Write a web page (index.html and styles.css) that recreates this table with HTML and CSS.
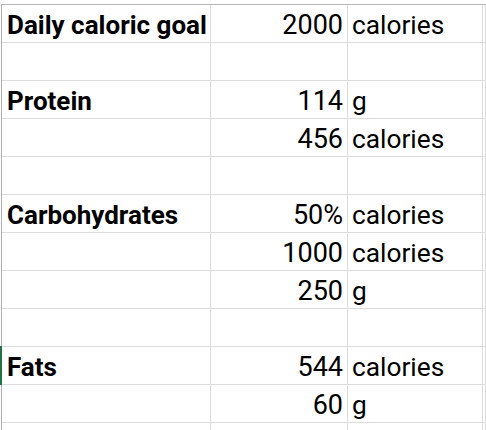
FILE: index.html
```html
<!DOCTYPE html>
<html>
<head>
<meta charset="utf-8">
<link rel="stylesheet" href="styles.css">
</head>
<body>
<div class="sheet">
  <div class="grid">
    <div class="cell label">Daily caloric goal</div><div class="cell num">2000</div><div class="cell unit">calories</div><div class="cell"></div>
    <div class="cell"></div><div class="cell"></div><div class="cell"></div><div class="cell"></div>
    <div class="cell label">Protein</div><div class="cell num">114</div><div class="cell unit">g</div><div class="cell"></div>
    <div class="cell"></div><div class="cell num">456</div><div class="cell unit">calories</div><div class="cell"></div>
    <div class="cell"></div><div class="cell"></div><div class="cell"></div><div class="cell"></div>
    <div class="cell label">Carbohydrates</div><div class="cell num">50%</div><div class="cell unit">calories</div><div class="cell"></div>
    <div class="cell"></div><div class="cell num">1000</div><div class="cell unit">calories</div><div class="cell"></div>
    <div class="cell"></div><div class="cell num">250</div><div class="cell unit">g</div><div class="cell"></div>
    <div class="cell"></div><div class="cell"></div><div class="cell"></div><div class="cell"></div>
    <div class="cell label selected">Fats</div><div class="cell num">544</div><div class="cell unit">calories</div><div class="cell"></div>
    <div class="cell"></div><div class="cell num">60</div><div class="cell unit">g</div><div class="cell"></div>
    <div class="cell last"></div><div class="cell last"></div><div class="cell last"></div><div class="cell last"></div>
  </div>
</div>
</body>
</html>
```

FILE: styles.css
```css
html, body {
  margin: 0;
  padding: 0;
  background: #ffffff;
  overflow: hidden;
}
body {
  width: 486px;
  height: 430px;
  font-family: Roboto, "Liberation Sans", sans-serif;
  font-size: 26px;
  color: #000000;
}
.sheet {
  margin-top: 4px;
  margin-left: 1px;
  border-top: 1px solid #b7b7b7;
  border-left: 1px solid #b0b0b0;
}
.grid {
  display: grid;
  grid-template-columns: 209px 137px 135px 1fr;
  grid-template-rows: repeat(11, 38px) 7px;
}
.cell {
  box-sizing: border-box;
  border-right: 1px solid #dcdcdc;
  border-bottom: 1px solid #dcdcdc;
  display: flex;
  align-items: flex-end;
  line-height: 26px;
  padding-bottom: 4px;
  white-space: nowrap;
  position: relative;
}
.cell.last {
  border-bottom: none;
  padding-bottom: 0;
}
.label {
  font-weight: 700;
  padding-left: 5px;
}
.num {
  justify-content: flex-end;
  padding-right: 4px;
  font-size: 27px;
}
.unit {
  padding-left: 4px;
  font-size: 26.3px;
}
.selected::before {
  content: "";
  position: absolute;
  left: -2px;
  top: -1px;
  bottom: -1px;
  width: 2px;
  background: #217346;
}
```
